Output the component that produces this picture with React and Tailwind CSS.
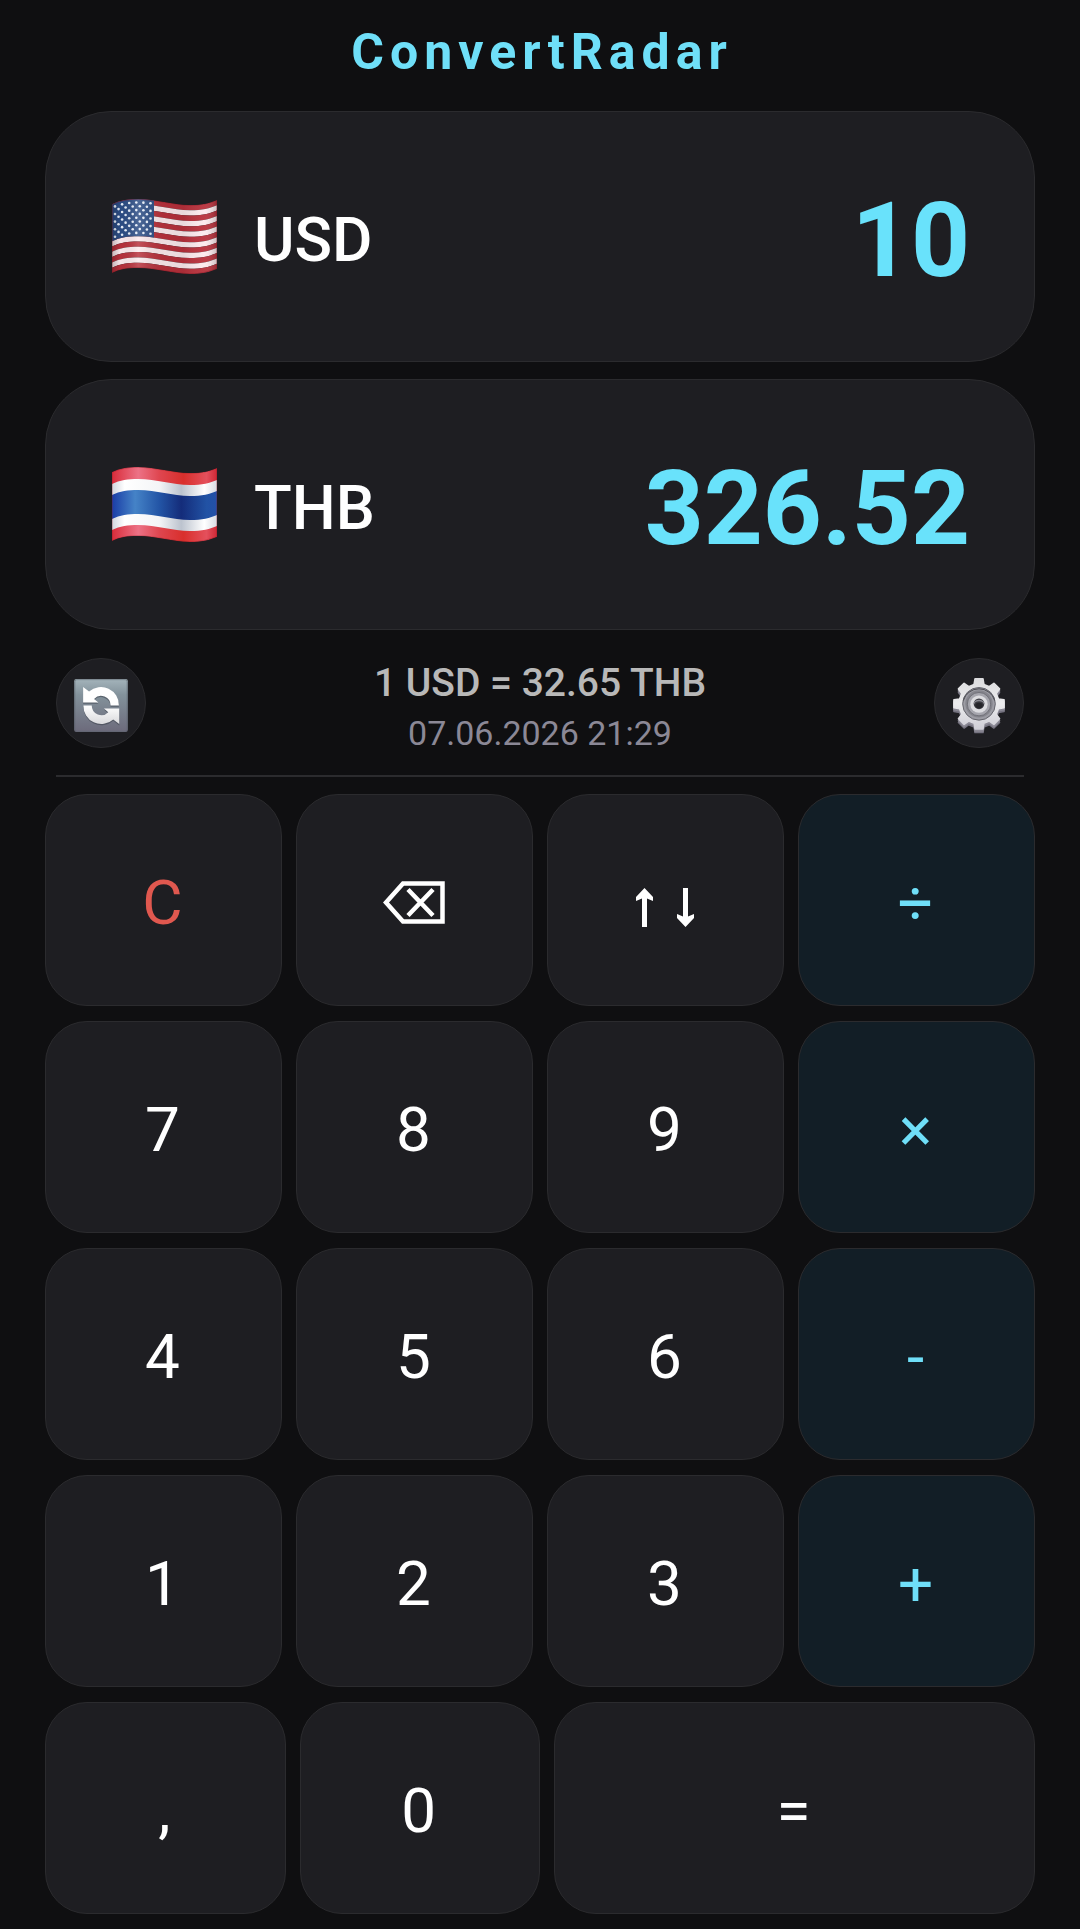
import { useState } from 'react'

const WHITE = '#ffffff'
const RED = '#b8313c'

// Wavy horizontal band between two heights of a 105x75 flag
function band(y1, y2) {
  return [
    `M0 ${y1 + 5} C8 ${y1 + 1} 16 ${y1} 26 ${y1} C45 ${y1} 60 ${y1 + 6} 78 ${y1 + 6} C90 ${y1 + 6} 98 ${y1 + 4} 105 ${y1 + 1}`,
    `V${y2 + 1} C98 ${y2 + 4} 90 ${y2 + 6} 78 ${y2 + 6} C60 ${y2 + 6} 45 ${y2} 26 ${y2} C16 ${y2} 8 ${y2 + 1} 0 ${y2 + 5} Z`,
  ].join(' ')
}

function waveAt(x) {
  if (x < 26) return 5 * Math.pow(1 - x / 26, 2)
  return 3 - 3 * Math.cos(((x - 26) / 52) * Math.PI)
}

function FlagUS() {
  const stripe = 69 / 13
  const stars = []
  for (let row = 0; row < 9; row++) {
    const count = row % 2 ? 5 : 6
    for (let i = 0; i < count; i++) {
      const x = (row % 2 ? 6.5 : 3) + i * 7.1
      stars.push({ x, y: 3.5 + row * 3.8 + waveAt(x) })
    }
  }

  return (
    <svg viewBox="0 0 105 75" className="w-[105px] h-[75px]" role="img" aria-label="United States">
      <defs>
        <clipPath id="us-shape"><path d={band(0, 69)} /></clipPath>
        <clipPath id="us-canton"><rect width="42" height="50" /></clipPath>
        <linearGradient id="us-shade" x1="0" x2="1" y1="0" y2="0">
          <stop offset="0" stopColor="#000" stopOpacity="0.22" />
          <stop offset="0.08" stopColor="#000" stopOpacity="0.02" />
          <stop offset="0.25" stopColor="#fff" stopOpacity="0.16" />
          <stop offset="0.5" stopColor="#000" stopOpacity="0.06" />
          <stop offset="0.68" stopColor="#000" stopOpacity="0.08" />
          <stop offset="0.88" stopColor="#fff" stopOpacity="0.05" />
          <stop offset="1" stopColor="#000" stopOpacity="0.2" />
        </linearGradient>
      </defs>
      <g clipPath="url(#us-shape)">
        {Array.from({ length: 13 }, (_, i) => (
          <path key={i} d={band(i * stripe, (i + 1) * stripe)} fill={i % 2 ? '#fdebee' : RED} />
        ))}
        <path d={band(0, stripe * 7)} fill="#2c4d85" clipPath="url(#us-canton)" />
        {stars.map((s, i) => (
          <circle key={i} cx={s.x} cy={s.y} r="1.3" fill="#eaf1fb" />
        ))}
        <rect width="105" height="75" fill="url(#us-shade)" />
        <path d={band(0, 69)} fill="none" stroke="#7d1520" strokeOpacity="0.4" strokeWidth="1.5" />
      </g>
    </svg>
  )
}

function FlagTH() {
  return (
    <svg viewBox="0 0 105 75" className="w-[105px] h-[75px]" role="img" aria-label="Thailand">
      <defs>
        <clipPath id="th-shape"><path d={band(0, 69)} /></clipPath>
        <linearGradient id="th-red" x1="0" x2="1" y1="0" y2="0">
          <stop offset="0" stopColor="#d92c3a" />
          <stop offset="0.25" stopColor="#ec7286" />
          <stop offset="0.45" stopColor="#df4650" />
          <stop offset="0.68" stopColor="#d92f2c" />
          <stop offset="0.9" stopColor="#e4505c" />
          <stop offset="1" stopColor="#cf2836" />
        </linearGradient>
        <linearGradient id="th-white" x1="0" x2="1" y1="0" y2="0">
          <stop offset="0" stopColor="#d2d6de" />
          <stop offset="0.12" stopColor="#ffffff" />
          <stop offset="0.45" stopColor="#f4f5f7" />
          <stop offset="0.66" stopColor="#bcc3ce" />
          <stop offset="0.88" stopColor="#ffffff" />
          <stop offset="1" stopColor="#d8dce4" />
        </linearGradient>
        <linearGradient id="th-blue" x1="0" x2="1" y1="0" y2="0">
          <stop offset="0" stopColor="#1a3da6" />
          <stop offset="0.22" stopColor="#4583c7" />
          <stop offset="0.45" stopColor="#2355a6" />
          <stop offset="0.66" stopColor="#142c7a" />
          <stop offset="0.9" stopColor="#2152a4" />
          <stop offset="1" stopColor="#2350a8" />
        </linearGradient>
      </defs>
      <g clipPath="url(#th-shape)">
        <path d={band(0, 69)} fill="url(#th-red)" />
        <path d={band(12, 58)} fill="url(#th-white)" />
        <path d={band(23, 47)} fill="url(#th-blue)" />
        <path d={band(0, 69)} fill="none" stroke="#8e1420" strokeOpacity="0.35" strokeWidth="1.5" />
      </g>
    </svg>
  )
}

function RefreshIcon() {
  const arrow = 'M27 24 L45 38 A54 54 0 0 1 135 80 H110 A29 29 0 0 0 60 60 L73 71 H27 Z'
  return (
    <svg viewBox="0 0 162 160" className="w-[54px] h-[53px] mt-1" aria-hidden="true">
      <defs>
        <linearGradient id="refresh-bg" x1="0" x2="0" y1="0" y2="1">
          <stop offset="0" stopColor="#a4b4bb" />
          <stop offset="0.3" stopColor="#83929b" />
          <stop offset="1" stopColor="#6c6a7b" />
        </linearGradient>
        <linearGradient id="refresh-low" x1="0" x2="0" y1="1" y2="0">
          <stop offset="0" stopColor="#ffffff" />
          <stop offset="1" stopColor="#d9d9dc" />
        </linearGradient>
      </defs>
      <rect width="162" height="160" rx="7" fill="url(#refresh-bg)" />
      <rect x="2" y="2" width="158" height="156" rx="6" fill="none" stroke="#5d6670" strokeOpacity="0.6" strokeWidth="3" />
      <g fill="#3c424c" fillOpacity="0.55" transform="translate(0 4)">
        <path d={arrow} />
        <path d={arrow} transform="rotate(180 81.5 80)" />
      </g>
      <path d={arrow} fill={WHITE} />
      <path d={arrow} fill="url(#refresh-low)" transform="rotate(180 81.5 80)" />
    </svg>
  )
}

function gearPath(cx, cy) {
  const point = (r, deg) => {
    const a = (deg * Math.PI) / 180
    return `${(cx + r * Math.cos(a)).toFixed(1)} ${(cy + r * Math.sin(a)).toFixed(1)}`
  }
  const points = []
  for (let t = 0; t < 8; t++) {
    const mid = t * 45 - 90
    points.push(point(60, mid - 14), point(76, mid - 9), point(76, mid + 9), point(60, mid + 14))
  }
  return `M${points.join(' L')} Z`
}

function GearIcon() {
  return (
    <svg viewBox="0 0 162 170" className="w-[54px] h-[57px] mt-1" aria-hidden="true">
      <defs>
        <linearGradient id="gear-face" x1="0" x2="0" y1="0" y2="1">
          <stop offset="0" stopColor="#dcdcde" />
          <stop offset="0.5" stopColor="#ececee" />
          <stop offset="1" stopColor="#cfced6" />
        </linearGradient>
      </defs>
      <g strokeLinejoin="round" strokeWidth="5">
        <path d={gearPath(81, 91)} fill="#74727f" stroke="#74727f" />
        <path d={gearPath(81, 86)} fill="#8a8894" stroke="#8a8894" />
        <path d={gearPath(81, 80)} fill="url(#gear-face)" stroke="url(#gear-face)" />
      </g>
      <circle cx="81" cy="80" r="49" fill="#9c9ca4" stroke="#67676f" strokeWidth="3" />
      <path d="M34 70 A49 49 0 0 1 128 70" fill="none" stroke="#4b4b52" strokeWidth="3" />
      <circle cx="81" cy="80" r="41" fill="#85858d" />
      <circle cx="81" cy="81" r="35" fill="#a6a6ae" stroke="#5c5c64" strokeWidth="2" />
      <circle cx="81" cy="81" r="26" fill="#dcdce0" />
      <circle cx="81" cy="80" r="16" fill="#3b3b41" />
      <ellipse cx="81" cy="85" rx="11" ry="8" fill="#25252a" />
      <path d="M66 80 A15 10 0 0 1 96 80" fill="none" stroke="#8a8a92" strokeWidth="4" />
    </svg>
  )
}

function BackspaceIcon() {
  return (
    <svg viewBox="0 0 62 44" className="w-[62px] h-[44px]" fill="none" stroke="currentColor" strokeWidth="4.5" aria-hidden="true">
      <path d="M20 2.5 H59.5 V40.5 H20 L3 21.5 Z" />
      <path d="M25 8.5 L50 34.5 M50 8.5 L25 34.5" />
    </svg>
  )
}

function SwapIcon() {
  const arrow = 'M8.5 0 L17 9 V13 L11 10.5 V39 H6 V10.5 L0 13 V9 Z'
  return (
    <svg viewBox="0 0 58 39" className="w-[58px] h-[39px] mt-2" fill="currentColor" aria-hidden="true">
      <path d={arrow} />
      <path d={arrow} transform="rotate(180 29 19.5)" />
    </svg>
  )
}

const keyRows = [
  [
    { id: 'C', label: 'C', tone: 'clear' },
    { id: 'back', label: <BackspaceIcon />, name: 'Backspace' },
    { id: 'swap', label: <SwapIcon />, name: 'Swap currencies' },
    { id: '÷', label: '÷', tone: 'op' },
  ],
  [{ id: '7', label: '7' }, { id: '8', label: '8' }, { id: '9', label: '9' }, { id: '×', label: '×', tone: 'op' }],
  [{ id: '4', label: '4' }, { id: '5', label: '5' }, { id: '6', label: '6' }, { id: '-', label: '-', tone: 'op' }],
  [{ id: '1', label: '1' }, { id: '2', label: '2' }, { id: '3', label: '3' }, { id: '+', label: '+', tone: 'op' }],
  [{ id: ',', label: ',' }, { id: '0', label: '0' }, { id: '=', label: '=' }],
]

const toneStyle = {
  clear: 'bg-[#1e1e22] text-[#e0584f]',
  op: 'bg-[#121e26] text-[#6fdff8]',
  plain: 'bg-[#1e1e22] text-white',
}

function Key({ item, onPress }) {
  return (
    <button
      onClick={() => onPress(item.id)}
      aria-label={item.name}
      className={`h-[212px] pt-1.5 pr-0.5 rounded-[42px] border border-[#2b2b2e] flex items-center justify-center text-[62px] leading-[72px] ${toneStyle[item.tone || 'plain']}`}
    >
      {item.label}
    </button>
  )
}

function CurrencyCard({ flag, code, value }) {
  return (
    <button className="w-full h-[251px] rounded-[66px] border border-[#2b2b2e] bg-[#1e1e22] pl-[66px] pr-16 flex items-center justify-between">
      <span className="flex items-center gap-[37px]">
        {flag}
        <span className="pt-1.5 text-[62px] leading-[72px] font-medium text-white">{code}</span>
      </span>
      <span className="pt-2 text-[103px] leading-[120px] font-bold text-[#69e2fb]">{value}</span>
    </button>
  )
}

const flags = { USD: <FlagUS />, THB: <FlagTH /> }
const perUsd = { USD: 1, THB: 32.652 }

function calculate(expression) {
  const parts = expression.match(/[\d.]+|[÷×+-]/g) || ['0']
  let total = parseFloat(parts[0]) || 0
  for (let i = 1; i + 1 < parts.length; i += 2) {
    const n = parseFloat(parts[i + 1])
    if (parts[i] === '÷') total /= n
    if (parts[i] === '×') total *= n
    if (parts[i] === '+') total += n
    if (parts[i] === '-') total -= n
  }
  return total
}

export default function App() {
  const [input, setInput] = useState('10')
  const [pair, setPair] = useState(['USD', 'THB'])
  const [from, to] = pair
  const rate = perUsd[to] / perUsd[from]

  function press(id) {
    if (id === 'C') setInput('0')
    else if (id === 'back') setInput(input.slice(0, -1) || '0')
    else if (id === 'swap') setPair([to, from])
    else if (id === '=') setInput(String(calculate(input)))
    else if (id === ',') setInput(input + '.')
    else setInput(input === '0' ? id : input + id)
  }

  return (
    <div className="min-h-screen bg-[#0f0f11] px-[45px] pb-3 font-['Roboto',sans-serif]">
      <h1 className="h-[111px] pt-6 pl-1 text-center text-[50px] leading-[56px] font-bold tracking-[6px] text-[#6fdff8]">
        ConvertRadar
      </h1>

      <div className="flex flex-col gap-[17px]">
        <CurrencyCard flag={flags[from]} code={from} value={input} />
        <CurrencyCard flag={flags[to]} code={to} value={(calculate(input) * rate).toFixed(2)} />
      </div>

      {/* Rate */}
      <div className="mx-[11px] mt-7 pb-[17px] border-b-2 border-[#2b2b2e] flex items-start justify-between">
        <button aria-label="Refresh rates" className="w-[90px] h-[90px] rounded-full border border-[#2b2b2e] bg-[#1e1e22] flex items-center justify-center">
          <RefreshIcon />
        </button>
        <div className="text-center leading-[50px]">
          <p className="text-[39px] font-medium text-[#b8b8b8]">1 {from} = {rate.toFixed(2)} {to}</p>
          <p className="text-[34px] text-[#8b8896]">07.06.2026 21:29</p>
        </div>
        <button aria-label="Settings" className="w-[90px] h-[90px] rounded-full border border-[#2b2b2e] bg-[#1e1e22] flex items-center justify-center">
          <GearIcon />
        </button>
      </div>

      {/* Keypad */}
      <div className="mt-[17px] flex flex-col gap-[15px]">
        {keyRows.map((row, i) => (
          <div key={i} className={`grid gap-[14px] ${row.length === 4 ? 'grid-cols-4' : 'grid-cols-[1fr_1fr_2fr]'}`}>
            {row.map(item => <Key key={item.id} item={item} onPress={press} />)}
          </div>
        ))}
      </div>
    </div>
  )
}
